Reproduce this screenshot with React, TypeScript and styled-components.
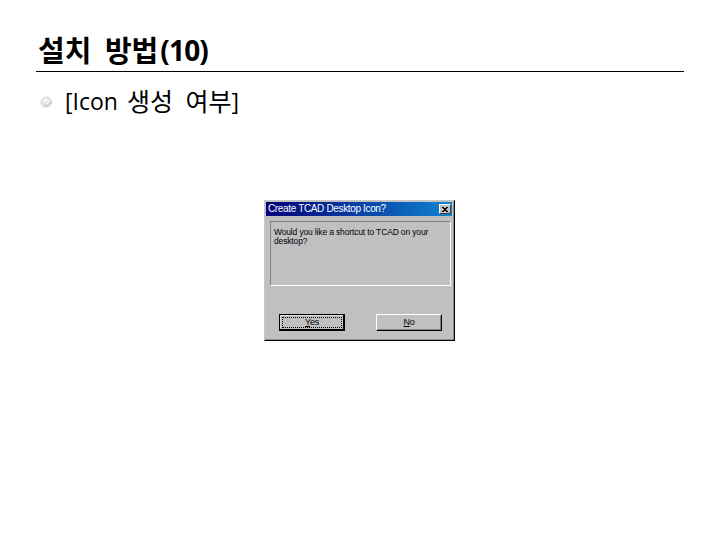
import React from 'react'
import styled, { createGlobalStyle } from 'styled-components'

const GlobalStyle = createGlobalStyle`
  * {
    box-sizing: border-box;
  }

  body {
    margin: 0;
    background: #ffffff;
  }
`

const Slide = styled.main`
  width: 720px;
  height: 540px;
  overflow: hidden;
  display: flex;
  flex-direction: column;
  padding: 28px 36px 0;
  background: #ffffff;
  color: #000000;
  font-family: 'Open Sans', 'Noto Sans CJK KR', sans-serif;
`

const Title = styled.h1`
  display: flex;
  align-items: center;
  height: 44px;
  margin: 0;
  padding: 2px 0 0 2px;
  border-bottom: 1px solid #000000;
  line-height: 41px;
  font-weight: 700;
  white-space: pre;
`

const Run = styled.span<{ size: number; tracking?: number; gap?: number; after?: number }>`
  margin-right: ${({ after = 0 }) => after}px;
  font-size: ${({ size }) => size}px;
  letter-spacing: ${({ tracking = 0 }) => tracking}px;
  word-spacing: ${({ gap = 0 }) => gap}px;
`

const BulletRow = styled.div`
  display: flex;
  align-items: center;
  height: 36px;
  margin-top: 11px;
  padding-left: 2px;
  line-height: 36px;
  white-space: pre;
`

const Bullet = styled.svg`
  width: 16px;
  height: 16px;
  margin: 1px 11px 0 0;
`

const Dialog = styled.section`
  display: flex;
  flex-direction: column;
  width: 191px;
  height: 141px;
  margin: 81px 0 0 228px;
  padding: 1px 2px 2px 1px;
  background: #c0c0c0;
  border: 1px solid;
  border-color: #c8c8c8 #000000 #000000 #c8c8c8;
  box-shadow: inset -1px -1px #909090;
  color: #000000;
  font-family: 'Liberation Sans', Arial, sans-serif;
`

const TitleBar = styled.header`
  display: flex;
  align-items: center;
  justify-content: space-between;
  height: 14px;
  padding: 0 1px 0 2px;
  background: linear-gradient(90deg, #000078 0%, #0848a8 55%, #1084d0 100%);
  color: #ffffff;
  font-size: 10px;
  letter-spacing: -0.35px;
  line-height: 14px;
  white-space: nowrap;
`

const CloseButton = styled.button`
  display: flex;
  align-items: center;
  justify-content: center;
  width: 12px;
  height: 10px;
  padding: 0;
  border: 1px solid;
  border-color: #ffffff #404040 #404040 #ffffff;
  background: #c0c0c0;
`

const Message = styled.p`
  height: 65px;
  margin: 5px 0 0 4px;
  width: 181px;
  padding: 6px 0 0 3px;
  border: 1px solid;
  border-color: #808080 #ffffff #ffffff #808080;
  font-size: 8.5px;
  letter-spacing: -0.15px;
  line-height: 9px;
  white-space: nowrap;
`

const Buttons = styled.div`
  display: flex;
  gap: 31px;
  margin: 28px 0 0 13px;
`

const Button = styled.button<{ focused?: boolean }>`
  width: 66px;
  height: 17px;
  padding: 1px;
  border: 1px solid;
  border-color: ${({ focused }) => (focused ? '#000000' : '#ffffff #000000 #000000 #ffffff')};
  box-shadow: ${({ focused }) => (focused ? 'inset -1px -1px #000000, inset 1px 1px #d8d8d8' : 'inset -1px -1px #808080')};
  background: #c0c0c0;
  color: #000000;
  font: 9px 'Liberation Sans', Arial, sans-serif;
  letter-spacing: -0.3px;

  span {
    display: block;
    height: 11px;
    margin: 0 1px;
    line-height: 9px;
    border: 1px ${({ focused }) => (focused ? 'dotted #000000' : 'solid transparent')};
  }
`

export default function App() {
  return (
    <>
      <GlobalStyle />
      <Slide>
        <Title>
          <Run size={29} gap={6} after={2}>
            설치 방법
          </Run>
          <Run size={28} tracking={-0.8}>
            (10)
          </Run>
        </Title>
        <BulletRow>
          <Bullet viewBox="0 0 16 16" fill="none">
            <ellipse cx="7.5" cy="9" rx="6" ry="5.5" fill="#f4f4f4" />
            <circle cx="8.5" cy="8" r="5" fill="#e6e6e6" stroke="#d4d4d4" />
            <path d="M5 7 8 4 10 5 7 8Z" fill="#fafafa" />
            <path d="M6 11q4 2 7-3" stroke="#bdbdbd" />
            <path d="m8 9 3-2 1 1-3 2Z" fill="#f6f6f6" />
          </Bullet>
          <Run size={23} gap={3}>
            [Icon{' '}
          </Run>
          <Run size={25} gap={6}>
            생성 여부
          </Run>
          <Run size={23}>]</Run>
        </BulletRow>
        <Dialog>
          <TitleBar>
            Create TCAD Desktop Icon?
            <CloseButton aria-label="Close">
              <svg width="6" height="5" viewBox="0 0 6 5" shapeRendering="crispEdges">
                <path d="M0 .5h2M4 .5h2M1 1.5h4M2 2.5h2M1 3.5h4M0 4.5h2M4 4.5h2" stroke="#000000" />
              </svg>
            </CloseButton>
          </TitleBar>
          <Message>
            Would you like a shortcut to TCAD on your
            <br />
            desktop?
          </Message>
          <Buttons>
            <Button focused>
              <span>
                <u>Y</u>es
              </span>
            </Button>
            <Button>
              <span>
                <u>N</u>o
              </span>
            </Button>
          </Buttons>
        </Dialog>
      </Slide>
    </>
  )
}
